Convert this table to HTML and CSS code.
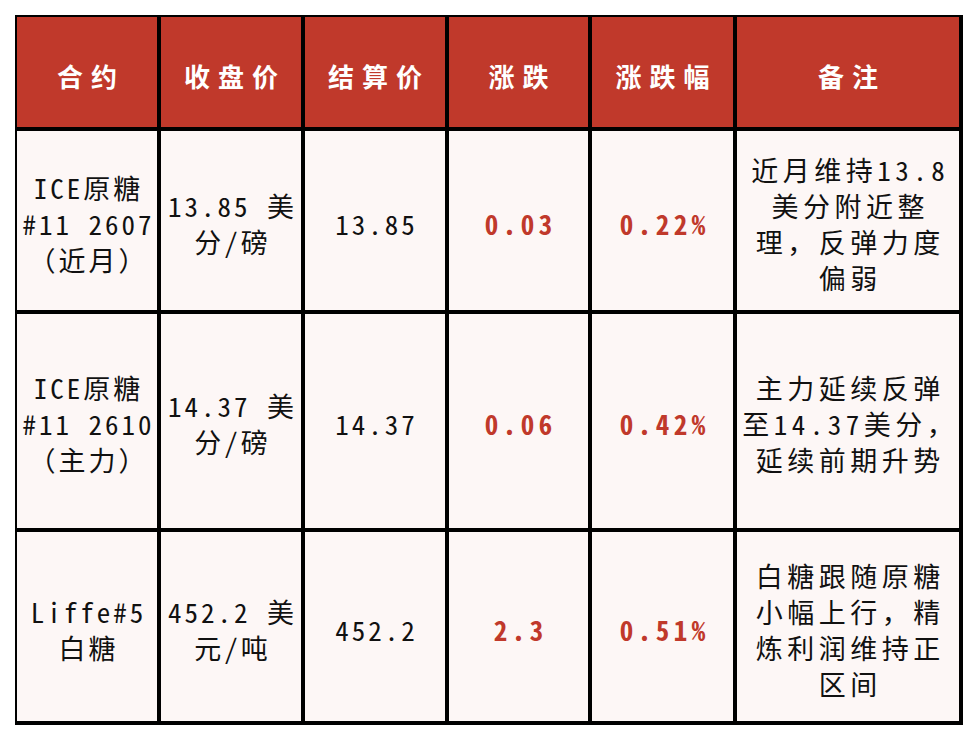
FILE: index.html
```html
<!DOCTYPE html>
<html lang="zh-CN">
<head>
<meta charset="utf-8">
<title>原糖行情</title>
<link rel="stylesheet" href="styles.css">
</head>
<body>
<div class="sheet">
  <div class="cell head"><span class="txt">合约</span></div>
  <div class="cell head"><span class="txt">收盘价</span></div>
  <div class="cell head"><span class="txt">结算价</span></div>
  <div class="cell head"><span class="txt">涨跌</span></div>
  <div class="cell head"><span class="txt">涨跌幅</span></div>
  <div class="cell head"><span class="txt">备注</span></div>

  <div class="cell"><span class="txt">ICE原糖<br>#11 2607<br><span class="fw">（</span>近月<span class="fw">）</span></span></div>
  <div class="cell"><span class="txt">13.85 美<br>分/磅</span></div>
  <div class="cell"><span class="txt">13.85</span></div>
  <div class="cell up"><span class="txt">0.03</span></div>
  <div class="cell up"><span class="txt">0.22%</span></div>
  <div class="cell note"><span class="txt">近月维持13.8<br>美分附近整<br>理<span class="fw">，</span>反弹力度<br>偏弱</span></div>

  <div class="cell"><span class="txt">ICE原糖<br>#11 2610<br><span class="fw">（</span>主力<span class="fw">）</span></span></div>
  <div class="cell"><span class="txt">14.37 美<br>分/磅</span></div>
  <div class="cell"><span class="txt">14.37</span></div>
  <div class="cell up"><span class="txt">0.06</span></div>
  <div class="cell up"><span class="txt">0.42%</span></div>
  <div class="cell note"><span class="txt">主力延续反弹<br>至14.37美分<span class="fw">，</span><br>延续前期升势</span></div>

  <div class="cell"><span class="txt">Liffe#5<br>白糖</span></div>
  <div class="cell"><span class="txt">452.2 美<br>元/吨</span></div>
  <div class="cell"><span class="txt">452.2</span></div>
  <div class="cell up"><span class="txt">2.3</span></div>
  <div class="cell up"><span class="txt">0.51%</span></div>
  <div class="cell note"><span class="txt">白糖跟随原糖<br>小幅上行<span class="fw">，</span>精<br>炼利润维持正<br>区间</span></div>
</div>
</body>
</html>
```
FILE: styles.css
```css
html, body {
  margin: 0;
  padding: 0;
  background: #ffffff;
}

body {
  font-family: "Noto Sans CJK SC", "Noto Sans", sans-serif;
  font-feature-settings: "hwid" 1;
}

.sheet {
  display: grid;
  grid-template-columns: 140px 140px 140px 139px 141px 222px;
  grid-template-rows: 110px 179px 214px 189px;
  gap: 4px;
  width: max-content;
  margin: 15px 0 0 15px;
  padding: 2px 4px 4px 2px;
  background: #000000;
}

.cell {
  display: flex;
  align-items: center;
  justify-content: center;
  text-align: center;
  padding: 6px 0 0 3px;
  background: #fdf7f6;
  color: #111111;
  font-size: 27px;
  font-weight: 400;
  line-height: 36px;
  letter-spacing: 3px;
  white-space: nowrap;
}

.txt {
  display: block;
}

.fw {
  font-feature-settings: "hwid" 0;
}

.head {
  background: #c0392b;
  color: #ffffff;
  font-size: 26px;
  font-weight: 700;
  letter-spacing: 8px;
  padding: 8px 0 0 8px;
}

.note {
  letter-spacing: 4.5px;
  padding-left: 4.5px;
}

.up {
  color: #c0392b;
  font-weight: 700;
  letter-spacing: 4.5px;
  padding-left: 4.5px;
}
```
